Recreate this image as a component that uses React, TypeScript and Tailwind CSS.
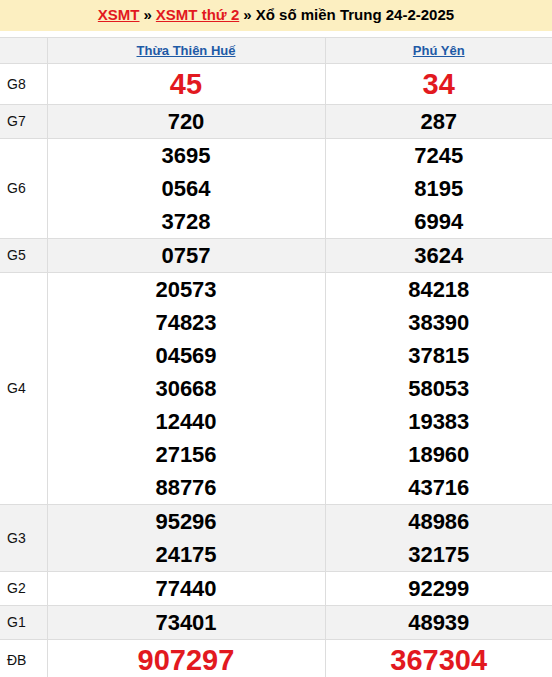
import React from 'react';

type Row = { label: string; hue: [string[], string[]]; big?: boolean; gray?: boolean };

const rows: Row[] = [
    { label: 'G8', hue: [['45'], ['34']], big: true },
    { label: 'G7', hue: [['720'], ['287']], gray: true },
    { label: 'G6', hue: [['3695', '0564', '3728'], ['7245', '8195', '6994']] },
    { label: 'G5', hue: [['0757'], ['3624']], gray: true },
    {
        label: 'G4',
        hue: [
            ['20573', '74823', '04569', '30668', '12440', '27156', '88776'],
            ['84218', '38390', '37815', '58053', '19383', '18960', '43716'],
        ],
    },
    { label: 'G3', hue: [['95296', '24175'], ['48986', '32175']], gray: true },
    { label: 'G2', hue: [['77440'], ['92299']] },
    { label: 'G1', hue: [['73401'], ['48939']], gray: true },
    { label: 'ĐB', hue: [['907297'], ['367304']], big: true },
];

function Numbers({ list, big }: { list: string[]; big?: boolean }) {
    return (
        <div className="flex flex-col items-center">
            {list.map((n, i) =>
                big ? (
                    <div key={i} className="text-[29px] leading-[40px] font-bold text-[#e2191f]">
                        {n}
                    </div>
                ) : (
                    <div key={i} className="text-[22px] leading-[33px] font-bold text-black">
                        {n}
                    </div>
                )
            )}
        </div>
    );
}

export default function App() {
    return (
        <div className="w-[552px] bg-white font-['Liberation_Sans',Arial,sans-serif]">
            <div className="h-[31px] bg-[#fcefc1] flex items-center justify-center text-[15px] font-bold text-black">
                <a href="#" className="text-[#e2191f] underline">XSMT</a>
                <span className="mx-[4px]">»</span>
                <a href="#" className="text-[#e2191f] underline">XSMT thứ 2</a>
                <span className="ml-[4px]">» Xổ số miền Trung 24-2-2025</span>
            </div>

            <table className="mt-[6px] w-full border-collapse">
                <thead>
                    <tr className="bg-[#f2f2f2]">
                        <th className="w-[47px] h-[26px] border border-l-0 border-[#dddddd]"></th>
                        <th className="w-[278px] border border-[#dddddd] text-[13px] font-bold">
                            <a href="#" className="text-[#1e5aa6] underline">Thừa Thiên Huế</a>
                        </th>
                        <th className="border border-r-0 border-[#dddddd] text-[13px] font-bold">
                            <a href="#" className="text-[#1e5aa6] underline">Phú Yên</a>
                        </th>
                    </tr>
                </thead>
                <tbody>
                    {rows.map((r) => (
                        <tr key={r.label} className={r.gray ? 'bg-[#f2f2f2]' : 'bg-white'}>
                            <td className="border border-l-0 border-[#dddddd] pl-[7px] text-[14px] text-[#111] align-middle">
                                {r.label}
                            </td>
                            <td className="border border-[#dddddd] p-0">
                                <Numbers list={r.hue[0]} big={r.big} />
                            </td>
                            <td className="border border-r-0 border-[#dddddd] p-0">
                                <Numbers list={r.hue[1]} big={r.big} />
                            </td>
                        </tr>
                    ))}
                </tbody>
            </table>
        </div>
    );
}
